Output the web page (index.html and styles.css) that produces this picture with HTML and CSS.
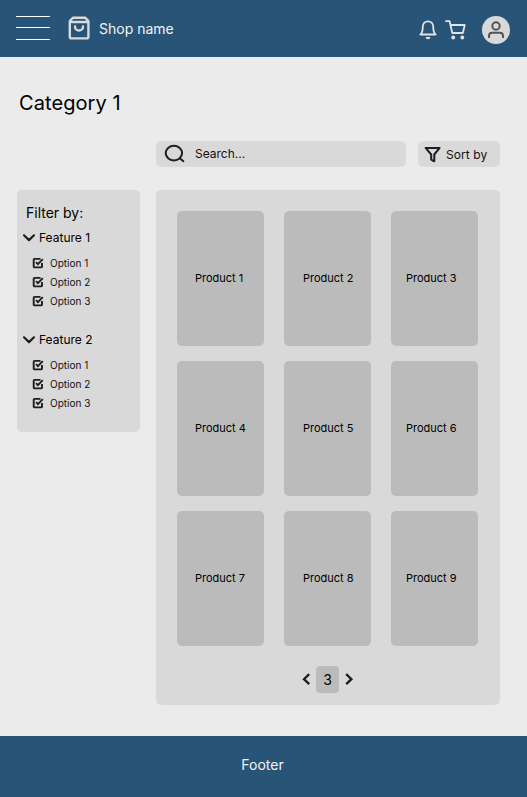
FILE: index.html
```html
<!DOCTYPE html>
<html lang="en">
<head>
<meta charset="utf-8">
<title>Shop name</title>
<link rel="stylesheet" href="styles.css">
</head>
<body>
<svg class="defs" width="0" height="0">
  <symbol id="check" viewBox="0 0 12 12"><path d="M10 6V9.4Q10 10.4 9 10.4H2.7Q1.7 10.4 1.7 9.4V2.9Q1.7 1.9 2.7 1.9H8.5M4 5.2L5.9 7.1L10.8 2.2" fill="none" stroke="#1e1e1e" stroke-width="1.9"/></symbol>
  <symbol id="down" viewBox="0 0 12 8"><path d="M1 1.3L6 6.1L11 1.3" fill="none" stroke="#1e1e1e" stroke-width="2.2" stroke-linecap="round" stroke-linejoin="round"/></symbol>
</svg>
<header class="header">
  <div class="menu"><i></i><i></i><i></i></div>
  <svg class="bag" width="24" height="26" viewBox="0 0 24 26"><g fill="none" stroke="#d9d9d9" stroke-width="2.4" stroke-linejoin="round" stroke-linecap="round"><path d="M2.8 6L5.9 2.7H18.1L21.4 6V21.8Q21.4 23.4 19.8 23.4H4.4Q2.8 23.4 2.8 21.8ZM2.8 7H21.4"/><path d="M8 11.4C8 16.8 16 16.8 16 11.4"/></g></svg>
  <span class="shop">Shop name</span>
  <svg class="bell" width="20" height="22" viewBox="0 0 20 22"><path d="M2.4 15.5C4.8 13.4 4.8 11.5 4.8 7.8C4.8 .5 15.2 .5 15.2 7.8C15.2 11.5 15.2 13.4 17.6 15.5Z" fill="none" stroke="#e3e3e3" stroke-width="1.8" stroke-linejoin="round"/><path d="M7.5 18H12.5Q12 20.3 10 20.3Q8 20.3 7.5 18Z" fill="#e3e3e3"/></svg>
  <svg class="cart" width="22" height="22" viewBox="0 0 22 22"><path d="M1 2.2H4.6L7.3 14H17.8L19.8 6H5.5" fill="none" stroke="#e3e3e3" stroke-width="1.8" stroke-linejoin="round" stroke-linecap="round"/><circle cx="8.2" cy="18.5" r="1.9" fill="#e3e3e3"/><circle cx="17.3" cy="18.5" r="1.9" fill="#e3e3e3"/></svg>
  <svg class="avatar" width="28" height="28" viewBox="0 0 28 28"><circle cx="14" cy="14" r="14" fill="#d9d9d9"/><g fill="none" stroke="#555" stroke-width="2" stroke-linecap="round"><circle cx="14" cy="10" r="3.7"/><path d="M7 21.3V20Q7 16.8 10.2 16.8H17.8Q21 16.8 21 20V21.3"/></g></svg>
</header>
<main class="main">
  <h1 class="title">Category 1</h1>
  <div class="tools">
    <div class="search"><svg width="22" height="20" viewBox="0 0 22 20"><g fill="none" stroke="#1e1e1e" stroke-width="2" stroke-linecap="round"><ellipse cx="9.9" cy="9.1" rx="8.2" ry="7.3"/><path d="M15.8 14.2L19.4 17.2"/></g></svg><span>Search...</span></div>
    <div class="sort"><svg width="18" height="18" viewBox="0 0 18 18"><path d="M1.6 1.9H15.6L10.3 8.5V15.3L7.2 13.7V8.5Z" fill="none" stroke="#1e1e1e" stroke-width="2" stroke-linejoin="round"/></svg><span>Sort by</span></div>
  </div>
  <div class="columns">
    <aside class="filters">
      <h2>Filter by:</h2>
      <section>
        <h3><svg width="12" height="8"><use href="#down"/></svg>Feature 1</h3>
        <ul>
          <li><svg width="12" height="12"><use href="#check"/></svg>Option 1</li>
          <li><svg width="12" height="12"><use href="#check"/></svg>Option 2</li>
          <li><svg width="12" height="12"><use href="#check"/></svg>Option 3</li>
        </ul>
      </section>
      <section>
        <h3><svg width="12" height="8"><use href="#down"/></svg>Feature 2</h3>
        <ul>
          <li><svg width="12" height="12"><use href="#check"/></svg>Option 1</li>
          <li><svg width="12" height="12"><use href="#check"/></svg>Option 2</li>
          <li><svg width="12" height="12"><use href="#check"/></svg>Option 3</li>
        </ul>
      </section>
    </aside>
    <div class="catalog">
      <div class="grid">
        <div class="card">Product 1</div><div class="card mid">Product 2</div><div class="card last">Product 3</div>
        <div class="card">Product 4</div><div class="card mid">Product 5</div><div class="card last">Product 6</div>
        <div class="card">Product 7</div><div class="card mid">Product 8</div><div class="card last">Product 9</div>
      </div>
      <nav class="pager">
        <svg width="10" height="14" viewBox="0 0 10 14"><path d="M8.2 1.2L3 6.2L8.2 11.2" fill="none" stroke="#1e1e1e" stroke-width="2.3"/></svg>
        <span>3</span>
        <svg width="10" height="14" viewBox="0 0 10 14"><path d="M2.2 1.2L7.4 6.2L2.2 11.2" fill="none" stroke="#1e1e1e" stroke-width="2.3"/></svg>
      </nav>
    </div>
  </div>
</main>
<footer class="footer">Footer</footer>
</body>
</html>
```
FILE: styles.css
```css
* { box-sizing: border-box; margin: 0; padding: 0; }
body { width: 527px; height: 797px; background: #ebebeb; color: #000; font-family: Inter, sans-serif; display: flex; flex-direction: column; overflow: hidden; }
svg { display: block; flex: none; }
.defs { display: none; }
.header { height: 57px; background: #285577; display: flex; align-items: flex-start; padding: 15px 17px 0 16px; }
.menu { width: 34px; height: 25px; padding-top: 1px; display: grid; grid-template-rows: 11px 12px 1px; }
.menu i { height: 1px; background: #fff; }
.bag { margin-left: 17px; }
.shop { font-size: 14px; line-height: 20px; color: #f3f3f3; margin: 4px 0 0 8px; }
.bell { margin: 4px 0 0 auto; }
.cart { margin: 4px 1px 0 7px; }
.avatar { margin: 1px 0 0 14px; }
.main { height: 679px; padding: 32px 27px 0 17px; }
.title { font-size: 20px; font-weight: 400; line-height: 28px; padding-left: 2px; letter-spacing: 0.08px; }
.tools { display: flex; gap: 12px; margin: 24px 0 0 139px; }
.search, .sort { height: 26px; background: #d9d9d9; border-radius: 5px; display: flex; align-items: center; font-size: 12px; color: #111; }
.search { width: 250px; padding: 0 0 1px 8px; gap: 9px; }
.sort { width: 82px; padding: 1px 0 0 6px; gap: 4px; letter-spacing: 0.07px; }
.columns { display: flex; align-items: flex-start; gap: 16px; margin-top: 23px; }
.filters { width: 123px; height: 242px; background: #d9d9d9; border-radius: 5px; padding: 13px 0 0 6px; }
.filters h2 { font-size: 14px; font-weight: 400; line-height: 20px; padding-left: 3px; }
.filters h3 { font-size: 12px; font-weight: 400; height: 20px; display: flex; align-items: center; gap: 4px; }
.filters h3 svg { margin-top: 2px; }
.filters section { height: 102px; padding-top: 4px; }
.filters ul { list-style: none; padding: 6px 0 0 9px; }
.filters li { font-size: 10px; height: 19px; display: flex; align-items: center; gap: 6px; color: #111; }
.catalog { width: 344px; height: 515px; background: #d9d9d9; border-radius: 5px; padding: 21px 0 0 21px; }
.grid { display: grid; grid-template-columns: repeat(3, 87px); grid-auto-rows: 135px; gap: 15px 20px; }
.card { background: #bbb; border-radius: 5px; font-size: 11px; display: flex; align-items: center; padding: 0 0 2px 18px; white-space: nowrap; }
.mid { padding-left: 19px; }
.last { padding-left: 15px; }
.pager { display: flex; align-items: center; gap: 5px; margin: 20px 0 0 124px; }
.pager span { width: 23px; height: 27px; border-radius: 4px; background: #bbb; font-size: 14px; line-height: 28px; text-align: center; }
.footer { height: 61px; background: #285577; color: #f3f3f3; font-size: 14px; line-height: 58px; text-align: center; padding-right: 2px; }
```
